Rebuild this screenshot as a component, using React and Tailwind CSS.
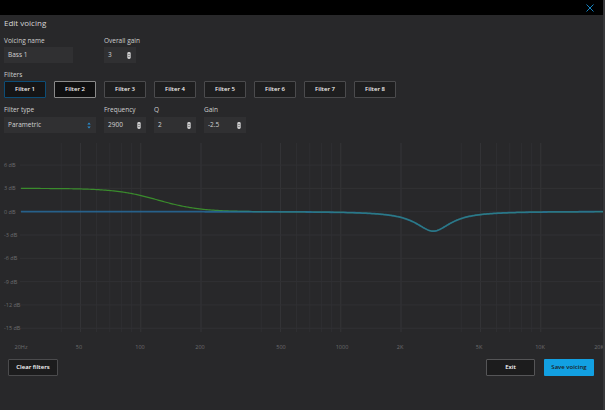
import React from "react";

const fx = (f) => 200 * Math.log10(f / 20) + 1;
const dbY = (db) => 73.7 - db * 7.77;

function peakDb(f, f0, Q, g, fs = 48000) {
  const A = Math.pow(10, g / 40);
  const w0 = (2 * Math.PI * f0) / fs;
  const al = Math.sin(w0) / (2 * Q);
  const c = Math.cos(w0);
  const b0 = 1 + al * A, b1 = -2 * c, b2 = 1 - al * A;
  const a0 = 1 + al / A, a1 = -2 * c, a2 = 1 - al / A;
  const w = (2 * Math.PI * f) / fs;
  const br = b0 + b1 * Math.cos(w) + b2 * Math.cos(2 * w);
  const bi = -(b1 * Math.sin(w) + b2 * Math.sin(2 * w));
  const ar = a0 + a1 * Math.cos(w) + a2 * Math.cos(2 * w);
  const ai = -(a1 * Math.sin(w) + a2 * Math.sin(2 * w));
  return 20 * Math.log10(Math.sqrt(br * br + bi * bi) / Math.sqrt(ar * ar + ai * ai));
}

const shelf = (x) => 3 * 0.5 * (1 - Math.tanh((x - 158) / 42));

function buildPaths() {
  let g = "";
  let b = "";
  for (let x = 21; x <= 603; x += 1) {
    const f = 20 * Math.pow(10, (x - 1) / 200);
    const p = peakDb(f, 2900, 2, -2.5);
    const tot = p + shelf(x);
    g += (x === 21 ? "M" : "L") + x + " " + dbY(tot).toFixed(2) + " ";
    b += (x === 21 ? "M" : "L") + x + " " + dbY(p).toFixed(2) + " ";
  }
  return { g, b };
}

const ticks = [40, 50, 60, 70, 80, 90, 100, 200, 400, 500, 600, 700, 800, 900, 1000, 2000, 4000, 5000, 6000, 7000, 8000, 9000, 10000, 20000];
const major = [50, 100, 200, 500, 1000, 2000, 5000, 10000];
const dbs = [6, 3, 0, -3, -6, -9, -12, -15];
const flabels = [
  ["20Hz", 21],
  ["50", 79],
  ["100", 140],
  ["200", 200],
  ["500", 281],
  ["1000", 342],
  ["2K", 400],
  ["5K", 479],
  ["10K", 540],
  ["20K", 599],
];

function Chart() {
  const { g, b } = buildPaths();
  return (
    <svg width="603" height="214" viewBox="0 0 603 214" className="block">
      {ticks.map((t) => (
        <line
          key={t}
          x1={fx(t)}
          x2={fx(t)}
          y1="5"
          y2="194"
          stroke={major.includes(t) ? "#353538" : "#2f2f32"}
          strokeWidth="1"
        />
      ))}
      {dbs.map((d) => (
        <line key={d} x1="20" x2="603" y1={dbY(d)} y2={dbY(d)} stroke="#313134" strokeWidth="1" />
      ))}
      {dbs.map((d) => (
        <text
          key={"t" + d}
          x="4"
          y={dbY(d) + 2}
          fontSize="5.5"
          fill="#6e6e70"
          fontFamily="'Open Sans', sans-serif"
        >
          {d} dB
        </text>
      ))}
      {flabels.map(([l, x]) => (
        <text
          key={l}
          x={x}
          y="211"
          fontSize="5.5"
          fill="#6e6e70"
          textAnchor="middle"
          fontFamily="'Open Sans', sans-serif"
        >
          {l}
        </text>
      ))}
      <path d={g} fill="none" stroke="#3a8c2c" strokeWidth="1.2" />
      <path d={b} fill="none" stroke="#2674ac" strokeOpacity="0.72" strokeWidth="1.8" />
    </svg>
  );
}

function Spinner() {
  return (
    <svg width="4" height="7" viewBox="0 0 4 7" className="block">
      <rect x="0.3" y="0" width="3.4" height="7" rx="1.4" fill="#cfcfd0" />
      <path d="M1.1 3 L2 1.7 L2.9 3 Z" fill="#555" />
      <path d="M1.1 4 L2 5.3 L2.9 4 Z" fill="#555" />
    </svg>
  );
}

function NumInput({ value, w }) {
  return (
    <div className={`${w} h-[16px] bg-[#303032] flex items-center justify-between pl-[4px] pr-[5px]`}>
      <span className="text-[6.5px] text-[#d2d2d2]">{value}</span>
      <Spinner />
    </div>
  );
}

function Label({ children, w }) {
  return <div className={`${w} text-[6.5px] leading-[8px] text-[#cfcfcf]`}>{children}</div>;
}

function FilterBtn({ label, variant }) {
  const cls =
    variant === "focus"
      ? "border-[#0d4d76] bg-[#151516]"
      : variant === "active"
      ? "border-[#8a8a8a] bg-[#0f0f10]"
      : "border-[#4b4b4d] bg-[#1e1e1f]";
  return (
    <div
      className={`w-[42px] h-[17px] border ${cls} rounded-[1px] flex items-center justify-center text-[6px] font-semibold text-[#f2f2f2]`}
    >
      {label}
    </div>
  );
}

export default function App() {
  return (
    <div className="w-[605px] h-[410px] flex bg-[#28282a] font-['Open_Sans',sans-serif] overflow-hidden">
      <div className="flex-1 flex flex-col">
        <div className="h-[15px] bg-black flex items-center justify-end pr-[9px]">
          <svg width="8" height="8" viewBox="0 0 8 8" className="block">
            <path d="M0.5 0.5 L7.5 7.5 M7.5 0.5 L0.5 7.5" stroke="#1684c3" strokeWidth="1" />
          </svg>
        </div>
        <div className="px-[4px] mt-[3px] text-[8px] leading-[10px] text-[#d6d6d6]">Edit voicing</div>

        <div className="px-[4px] mt-[9px] flex gap-[31px]">
          <Label w="w-[69px]">Voicing name</Label>
          <Label w="w-[42px]">Overall gain</Label>
        </div>
        <div className="px-[4px] mt-[2px] flex gap-[31px]">
          <div className="w-[69px] h-[16px] bg-[#303032] flex items-center pl-[4px]">
            <span className="text-[6.5px] text-[#d2d2d2]">Bass 1</span>
          </div>
          <NumInput value="3" w="w-[32px]" />
        </div>

        <div className="px-[4px] mt-[8px] text-[6.5px] leading-[8px] text-[#cfcfcf]">Filters</div>
        <div className="px-[4px] mt-[2px] flex gap-[8px]">
          <FilterBtn label="Filter 1" variant="focus" />
          <FilterBtn label="Filter 2" variant="active" />
          <FilterBtn label="Filter 3" />
          <FilterBtn label="Filter 4" />
          <FilterBtn label="Filter 5" />
          <FilterBtn label="Filter 6" />
          <FilterBtn label="Filter 7" />
          <FilterBtn label="Filter 8" />
        </div>

        <div className="px-[4px] mt-[8px] flex gap-[8px]">
          <Label w="w-[92px]">Filter type</Label>
          <Label w="w-[42px]">Frequency</Label>
          <Label w="w-[42px]">Q</Label>
          <Label w="w-[42px]">Gain</Label>
        </div>
        <div className="px-[4px] mt-[3px] flex gap-[8px]">
          <div className="w-[92px] h-[16px] bg-[#303032] flex items-center justify-between pl-[4px] pr-[5px]">
            <span className="text-[6.5px] text-[#d2d2d2]">Parametric</span>
            <svg width="4" height="7" viewBox="0 0 4 7" className="block">
              <path d="M0.3 2.6 L2 0.6 L3.7 2.6 Z" fill="#2a8fd2" />
              <path d="M0.3 4.4 L2 6.4 L3.7 4.4 Z" fill="#2a8fd2" />
            </svg>
          </div>
          <NumInput value="2900" w="w-[42px]" />
          <NumInput value="2" w="w-[42px]" />
          <NumInput value="-2.5" w="w-[42px]" />
        </div>

        <div className="mt-[5px]">
          <Chart />
        </div>

        <div className="mt-[7px] flex items-center pl-[8px] pr-[9px]">
          <div className="w-[50px] h-[17px] border border-[#4b4b4d] bg-[#1c1c1d] rounded-[1px] flex items-center justify-center text-[6px] font-semibold text-white">
            Clear filters
          </div>
          <div className="flex-1" />
          <div className="w-[49px] h-[17px] border border-[#555557] bg-[#1c1c1d] rounded-[1px] flex items-center justify-center text-[6px] font-semibold text-white">
            Exit
          </div>
          <div className="ml-[9px] w-[50px] h-[17px] bg-[#12a0e2] rounded-[1px] flex items-center justify-center text-[6px] font-semibold text-[#1b1b1b]">
            Save voicing
          </div>
        </div>
      </div>
      <div className="w-[2px] h-full bg-[#37373a]" />
    </div>
  );
}
